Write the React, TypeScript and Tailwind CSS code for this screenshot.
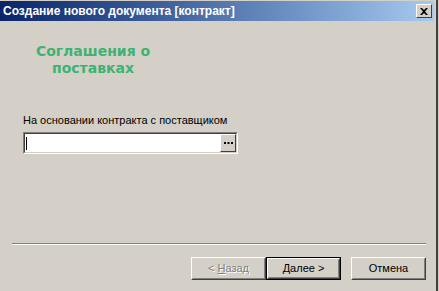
import React from "react";

const sans = { fontFamily: '"Liberation Sans", Arial, sans-serif' };

// classic raised 3d button
const WinButton = ({
  children,
  isDefault = false,
  disabled = false,
}: {
  children: React.ReactNode;
  isDefault?: boolean;
  disabled?: boolean;
}) => {
  const inner = (
    <div className="w-full h-full border border-t-white border-l-white border-b-[#404040] border-r-[#404040]">
      <div className="w-full h-full border border-t-[#d4d0c8] border-l-[#d4d0c8] border-b-[#808080] border-r-[#808080] flex items-center justify-center">
        <span
          className={`text-[11px] leading-none ${
            disabled
              ? "text-[#808080] [text-shadow:1px_1px_0_#ffffff]"
              : "text-black"
          }`}
        >
          {children}
        </span>
      </div>
    </div>
  );
  return (
    <div
      className={`w-[75px] h-[23px] ${isDefault ? "border border-black" : ""}`}
    >
      {inner}
    </div>
  );
};

export default function App() {
  return (
    <div
      className="w-[439px] h-[291px] bg-[#d4d0c8] flex overflow-hidden"
      style={sans}
    >
      <div className="w-[436px] flex flex-col pt-[1px]">
        {/* title bar */}
        <div className="h-[20px] w-[434px] flex items-center justify-between pl-[3px] pr-[2px] bg-gradient-to-r from-[#0a246a] to-[#a6caf0]">
          <span className="text-white text-[12px] font-bold leading-none">
            Создание нового документа [контракт]
          </span>
          <div className="w-[16px] h-[14px] bg-[#d4d0c8] border border-t-white border-l-white border-b-[#404040] border-r-[#404040] flex items-center justify-center">
            <svg width="8" height="7" viewBox="0 0 8 7">
              <path
                d="M0 0h2l2 2 2-2h2L5 3.5 8 7H6L4 5 2 7H0l3-3.5z"
                fill="#000"
              />
            </svg>
          </div>
        </div>

        {/* heading */}
        <div
          className="mt-[22px] ml-[16px] w-[154px] text-center text-[14px] leading-[17px] font-bold text-[#3cb371]"
          style={{ fontFamily: '"DejaVu Sans", Verdana, sans-serif' }}
        >
          Соглашения о<br />
          поставках
        </div>

        {/* label + field */}
        <div className="mt-[37px] ml-[23px] text-[11px] leading-[13px] text-black">
          На основании контракта с поставщиком
        </div>
        <div className="mt-[5px] ml-[23px] w-[215px] h-[22px] border border-t-[#808080] border-l-[#808080] border-b-white border-r-white">
          <div className="w-full h-full border border-t-[#404040] border-l-[#404040] border-b-[#d4d0c8] border-r-[#d4d0c8] bg-white flex items-center">
            <div className="ml-[1px] w-[1px] h-[13px] bg-black" />
            <div className="ml-auto w-[16px] h-full bg-[#d4d0c8] border border-t-white border-l-white border-b-[#404040] border-r-[#404040] flex items-center justify-center">
              <svg width="9" height="2" viewBox="0 0 9 2">
                <rect x="0" y="0" width="2" height="2" fill="#000" />
                <rect x="3.5" y="0" width="2" height="2" fill="#000" />
                <rect x="7" y="0" width="2" height="2" fill="#000" />
              </svg>
            </div>
          </div>
        </div>

        {/* separator */}
        <div className="mt-[89px] ml-[12px] mr-[10px] border-t border-t-[#808080] border-b border-b-white" />

        {/* buttons */}
        <div className="mt-[12px] flex justify-end pr-[10px]">
          <WinButton disabled>
            &lt; <span className="underline">Н</span>азад
          </WinButton>
          <WinButton isDefault>
            <span className="underline">Д</span>алее &gt;
          </WinButton>
          <div className="w-[10px]" />
          <WinButton>Отмена</WinButton>
        </div>
      </div>

      {/* right window edge */}
      <div className="w-[2px] h-full bg-[#404040]" />
      <div className="w-[1px] h-full bg-[#d4d0c8]" />
    </div>
  );
}
